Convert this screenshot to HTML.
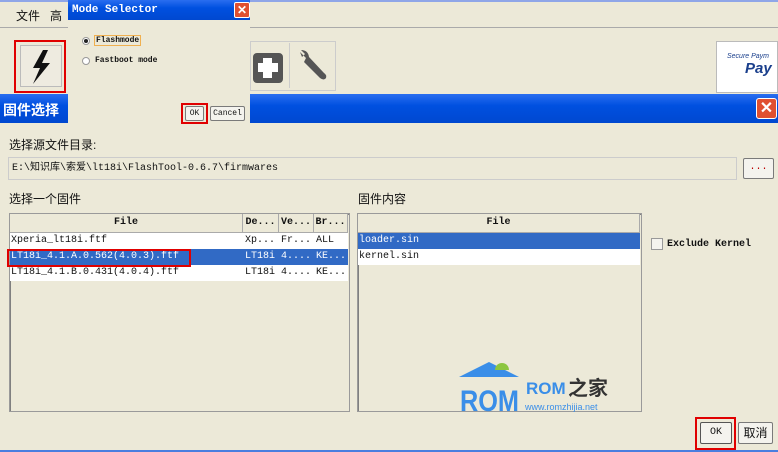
<!DOCTYPE html>
<html><head><meta charset="utf-8"><style>
*{margin:0;padding:0;box-sizing:border-box}
body{width:778px;height:452px;overflow:hidden;background:#ECE9D8;position:relative;font-family:"Liberation Mono","Noto Sans CJK SC",monospace;font-size:10px;color:#111}
.a{position:absolute}
.cn{font-family:"Liberation Sans","Noto Sans CJK SC",sans-serif;font-size:12px}
.tb{background:linear-gradient(#2a6ef0,#0050e0 40%,#0048d0);}
.btn{background:#f4f3ee;border:1px solid #7a7a7a;border-radius:2px;text-align:center}
.red{border:2px solid #e00000}
.tbl{background:#ECE9D8;border:1px solid #9a9a9a;box-shadow:inset 1px 1px 0 #808080}
.hd{background:#ECE9D8;border-right:1px solid #aaa;border-bottom:1px solid #aaa;text-align:center;font-weight:bold;height:19px;line-height:18px}
.row{height:16px;line-height:16px;background:#fff;white-space:nowrap;overflow:hidden}
.sel{background:#316AC5;color:#fff}
</style></head><body>
<div class="a" style="left:0;top:0;width:778px;height:2px;background:#8fa6e8"></div>
<div class="a cn" style="left:16px;top:7px">文件 &nbsp; 高</div>
<div class="a" style="left:0;top:27px;width:778px;height:1px;background:#aaa"></div>
<div class="a red" style="left:14px;top:40px;width:52px;height:53px"></div>
<div class="a" style="left:20px;top:45px;width:42px;height:42px;border:1px solid #bbb;background:#eeebe0"></div>
<svg class="a" style="left:29px;top:49px" width="24" height="36" viewBox="0 0 24 36"><path d="M14 1 L4 19 H11 L4 35 L21 14 H13 L19 1Z" fill="#111"/></svg>
<div class="a" style="left:250px;top:41px;width:86px;height:50px;border:1px solid #ccc;background:#ECE9D8"></div>
<div class="a" style="left:253px;top:53px;width:30px;height:30px;background:#555;border-radius:4px"></div>
<div class="a" style="left:263px;top:58px;width:9px;height:20px;background:#fff"></div>
<div class="a" style="left:258px;top:63px;width:20px;height:9px;background:#fff"></div>
<div class="a" style="left:289px;top:43px;width:1px;height:45px;background:#ccc"></div>
<svg class="a" style="left:294px;top:48px" width="36" height="36" viewBox="0 0 36 36"><path d="M6 4 L12 10 L10 14 L26 30 Q30 33 32 30 Q33 27 30 25 L15 9 Q14 2 7 2 L11 6 L8 9 Z" fill="#555"/></svg>
<div class="a" style="left:716px;top:41px;width:62px;height:52px;border:1px solid #bbb;background:#fff"></div>
<div class="a" style="left:727px;top:53px;font:italic 7px 'Liberation Sans';color:#1a3f8c">Secure Paym</div>
<div class="a" style="left:745px;top:60px;font:italic bold 15px 'Liberation Sans';color:#1a3f8c">Pay</div>
<div class="a tb" style="left:0;top:94px;width:778px;height:29px"></div>
<div class="a cn" style="left:3px;top:100px;color:#fff;font-weight:bold;font-size:14px">固件选择</div>
<div class="a" style="left:756px;top:98px;width:21px;height:21px;background:#e05030;border:1px solid #fff;border-radius:3px;color:#fff;font:bold 16px 'Liberation Sans';text-align:center;line-height:19px">✕</div>
<div class="a" style="left:68px;top:0;width:182px;height:127px;background:#ECE9D8"></div>
<div class="a tb" style="left:68px;top:0;width:182px;height:20px"></div>
<div class="a" style="left:72px;top:4px;color:#fff;font-weight:bold;font-size:11px">Mode Selector</div>
<div class="a" style="left:234px;top:2px;width:16px;height:16px;background:#e05030;border:1px solid #fff;border-radius:2px;color:#fff;font:bold 12px 'Liberation Sans';text-align:center;line-height:14px">✕</div>
<div class="a" style="left:82px;top:37px;width:8px;height:8px;border-radius:50%;border:1px solid #999;background:#fff"></div>
<div class="a" style="left:84px;top:39px;width:4px;height:4px;border-radius:50%;background:#222"></div>
<div class="a" style="left:94px;top:35px;border:1px solid #f0b050;font-size:8px;padding:0 1px;font-weight:bold">Flashmode</div>
<div class="a" style="left:82px;top:57px;width:8px;height:8px;border-radius:50%;border:1px solid #999;background:#fff"></div>
<div class="a" style="left:95px;top:56px;font-size:8px;font-weight:bold">Fastboot mode</div>
<div class="a red" style="left:181px;top:103px;width:27px;height:21px"></div>
<div class="a btn" style="left:185px;top:106px;width:19px;height:15px;font-size:8px;line-height:13px">OK</div>
<div class="a btn" style="left:210px;top:106px;width:35px;height:15px;font-size:8px;line-height:13px">Cancel</div>
<div class="a cn" style="left:9px;top:136px">选择源文件目录:</div>
<div class="a" style="left:8px;top:157px;width:729px;height:23px;border:1px solid #ccc;background:#ECE9D8;line-height:21px;padding-left:3px;font-size:10px">E:\知识库\索爱\lt18i\FlashTool-0.6.7\firmwares</div>
<div class="a btn" style="left:743px;top:158px;width:31px;height:21px;line-height:18px;color:#b00">...</div>
<div class="a cn" style="left:9px;top:190px">选择一个固件</div>
<div class="a cn" style="left:358px;top:190px">固件内容</div>
<div class="a tbl" style="left:9px;top:213px;width:341px;height:199px"></div>
<div class="a" style="left:10px;top:214px;width:338px">
 <div style="display:flex"><div class="hd" style="width:233px">File</div><div class="hd" style="width:36px">De...</div><div class="hd" style="width:35px">Ve...</div><div class="hd" style="width:34px">Br...</div></div>
 <div class="row" style="display:flex"><span style="width:233px;padding-left:1px">Xperia_lt18i.ftf</span><span style="width:36px;padding-left:2px">Xp...</span><span style="width:35px;padding-left:2px">Fr...</span><span style="width:34px;padding-left:2px">ALL</span></div>
 <div class="row sel" style="display:flex"><span style="width:233px;padding-left:1px">LT18i_4.1.A.0.562(4.0.3).ftf</span><span style="width:36px;padding-left:2px">LT18i</span><span style="width:35px;padding-left:2px">4....</span><span style="width:34px;padding-left:2px">KE...</span></div>
 <div class="row" style="display:flex"><span style="width:233px;padding-left:1px">LT18i_4.1.B.0.431(4.0.4).ftf</span><span style="width:36px;padding-left:2px">LT18i</span><span style="width:35px;padding-left:2px">4....</span><span style="width:34px;padding-left:2px">KE...</span></div>
</div>
<div class="a red" style="left:7px;top:249px;width:184px;height:18px"></div>
<div class="a tbl" style="left:357px;top:213px;width:285px;height:199px"></div>
<div class="a" style="left:358px;top:214px;width:282px">
 <div class="hd">File</div>
 <div class="row sel" style="padding-left:1px">loader.sin</div>
 <div class="row" style="padding-left:1px">kernel.sin</div>
</div>
<div class="a" style="left:651px;top:238px;width:12px;height:12px;border:1px solid #999;background:#f4f3ee"></div>
<div class="a" style="left:667px;top:239px;font-weight:bold;font-size:10px">Exclude Kernel</div>
<svg class="a" style="left:458px;top:360px" width="170" height="55" viewBox="0 0 170 55">
<path d="M1 17 L31 2 L61 17Z" fill="#3a8ee8"/>
<path d="M37 10 a7 7 0 0 1 14 0Z" fill="#8cc63f"/>
<text x="2" y="51" font-family="Liberation Sans" font-weight="bold" font-size="30" fill="#3a8ee8" textLength="59" lengthAdjust="spacingAndGlyphs">ROM</text>
<text x="68" y="34" font-family="Liberation Sans" font-weight="bold" font-size="17" fill="#3a8ee8">ROM</text>
<text x="110" y="35" font-family="Noto Sans CJK SC" font-weight="bold" font-size="20" fill="#333">之家</text>
<text x="67" y="50" font-family="Liberation Sans" font-size="9" fill="#3a8ee8">www.romzhijia.net</text>
</svg>
<div class="a red" style="left:695px;top:417px;width:41px;height:33px"></div>
<div class="a btn" style="left:700px;top:422px;width:32px;height:22px;line-height:20px;border-color:#555">OK</div>
<div class="a btn cn" style="left:738px;top:422px;width:35px;height:22px;line-height:20px">取消</div>
<div class="a" style="left:0;top:450px;width:778px;height:2px;background:#4a7ee0"></div>
</body></html>
